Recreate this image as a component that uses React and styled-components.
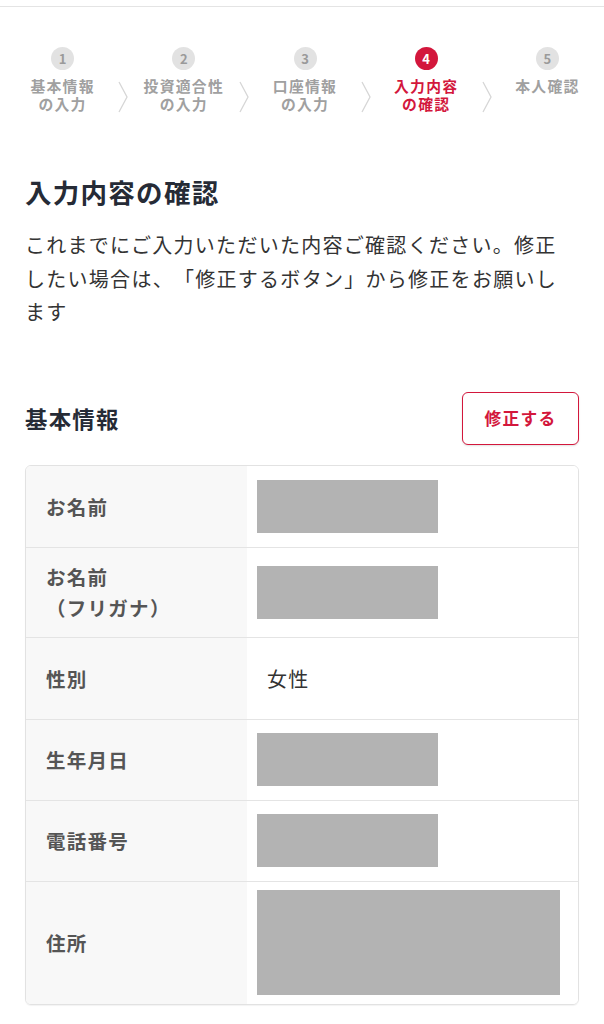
import React from "react";
import styled, { createGlobalStyle } from "styled-components";

const GlobalStyle = createGlobalStyle`
  body {
    margin: 0;
    background: #fff;
    font-family: "Noto Sans CJK JP", "Noto Sans", sans-serif;
    letter-spacing: 0.08em;
    text-spacing-trim: space-all;
  }
`;

const RED = "#d3173c";

const Page = styled.div`
  width: 604px;
  min-height: 1024px;
  border-top: 1px solid #e4e4e4;
  margin-top: 6px;
`;

const Stepper = styled.div`
  display: flex;
  align-items: flex-start;
  padding: 40px 4px 0 10px;
`;

const Step = styled.div`
  flex: 1;
  display: flex;
  flex-direction: column;
  align-items: center;
`;

const Circle = styled.div`
  width: 23px;
  height: 23px;
  border-radius: 50%;
  background: ${(p) => (p.$active ? RED : "#e2e2e2")};
  color: ${(p) => (p.$active ? "#fff" : "#9a9a9a")};
  font-size: 13px;
  font-weight: 700;
  letter-spacing: 0;
  display: flex;
  align-items: center;
  justify-content: center;
`;

const StepLabel = styled.div`
  margin-top: 7px;
  font-size: 14.8px;
  line-height: 18px;
  font-weight: 700;
  text-align: center;
  color: ${(p) => (p.$active ? RED : "#a0a0a0")};
  white-space: pre-line;
`;

const Chevron = styled.svg`
  flex: none;
  width: 16px;
  height: 32px;
  margin-top: 34px;
`;

const Title = styled.h1`
  margin: 61px 25px 0;
  font-size: 26.5px;
  line-height: 36px;
  font-weight: 700;
  color: #262b36;
`;

const Lead = styled.p`
  margin: 18px 25px 0;
  font-size: 20px;
  line-height: 33.5px;
  color: #333;
`;

const SectionHead = styled.div`
  display: flex;
  align-items: center;
  justify-content: space-between;
  margin: 63px 25px 0;
`;

const SectionTitle = styled.h2`
  margin: 0;
  font-size: 22.4px;
  font-weight: 700;
  color: #262b36;
`;

const EditButton = styled.button`
  width: 117px;
  height: 53px;
  border: 1.5px solid ${RED};
  border-radius: 6px;
  background: #fff;
  color: ${RED};
  font-family: inherit;
  font-size: 16.7px;
  font-weight: 700;
  letter-spacing: 0.08em;
  box-shadow: 0 1px 2px rgba(0, 0, 0, 0.12);
`;

const Table = styled.div`
  margin: 20px 25px 0;
  border: 1px solid #e2e2e2;
  border-radius: 6px;
  overflow: hidden;
  box-shadow: 0 1px 1px rgba(0, 0, 0, 0.05);
`;

const Row = styled.div`
  display: grid;
  grid-template-columns: 221px 1fr;
  min-height: ${(p) => p.$h}px;
  & + & {
    border-top: 1.5px solid #e4e4e4;
  }
`;

const Label = styled.div`
  background: #f8f8f8;
  padding: 0 20px;
  display: flex;
  align-items: center;
  font-size: 19.5px;
  line-height: 31px;
  font-weight: 700;
  color: #555;
  white-space: pre-line;
`;

const Value = styled.div`
  background: #fff;
  padding: 0 10px;
  display: flex;
  align-items: center;
  font-size: 20px;
  color: #333;
`;

const ValueText = styled.span`
  padding-left: 10px;
`;

const Masked = styled.div`
  width: ${(p) => p.$w}px;
  height: ${(p) => p.$h}px;
  background: #b3b3b3;
`;

const steps = [
  { n: 1, label: "基本情報\nの入力" },
  { n: 2, label: "投資適合性\nの入力" },
  { n: 3, label: "口座情報\nの入力" },
  { n: 4, label: "入力内容\nの確認", active: true },
  { n: 5, label: "本人確認" },
];

const rows = [
  { label: "お名前", h: 81, mask: [181, 53] },
  { label: "お名前\n（フリガナ）", h: 89, mask: [181, 53] },
  { label: "性別", h: 81, text: "女性" },
  { label: "生年月日", h: 80, mask: [181, 53] },
  { label: "電話番号", h: 80, mask: [181, 53] },
  { label: "住所", h: 122, mask: [303, 105] },
];

function App() {
  return (
    <>
      <GlobalStyle />
      <Page>
        <Stepper>
          {steps.map((s, i) => (
            <React.Fragment key={s.n}>
              {i > 0 && (
                <Chevron viewBox="0 0 16 32">
                  <polyline points="4,1 12,16 4,31" fill="none" stroke="#d6d6d6" strokeWidth="1.3" />
                </Chevron>
              )}
              <Step>
                <Circle $active={s.active}>{s.n}</Circle>
                <StepLabel $active={s.active}>{s.label}</StepLabel>
              </Step>
            </React.Fragment>
          ))}
        </Stepper>

        <Title>入力内容の確認</Title>
        <Lead>
          これまでにご入力いただいた内容ご確認ください。修正
          <br />
          したい場合は、「修正するボタン」から修正をお願いし
          <br />
          ます
        </Lead>

        <SectionHead>
          <SectionTitle>基本情報</SectionTitle>
          <EditButton>修正する</EditButton>
        </SectionHead>

        <Table>
          {rows.map((r) => (
            <Row key={r.label} $h={r.h}>
              <Label>{r.label}</Label>
              <Value>
                {r.mask ? <Masked $w={r.mask[0]} $h={r.mask[1]} /> : <ValueText>{r.text}</ValueText>}
              </Value>
            </Row>
          ))}
        </Table>
      </Page>
    </>
  );
}

export default App;
